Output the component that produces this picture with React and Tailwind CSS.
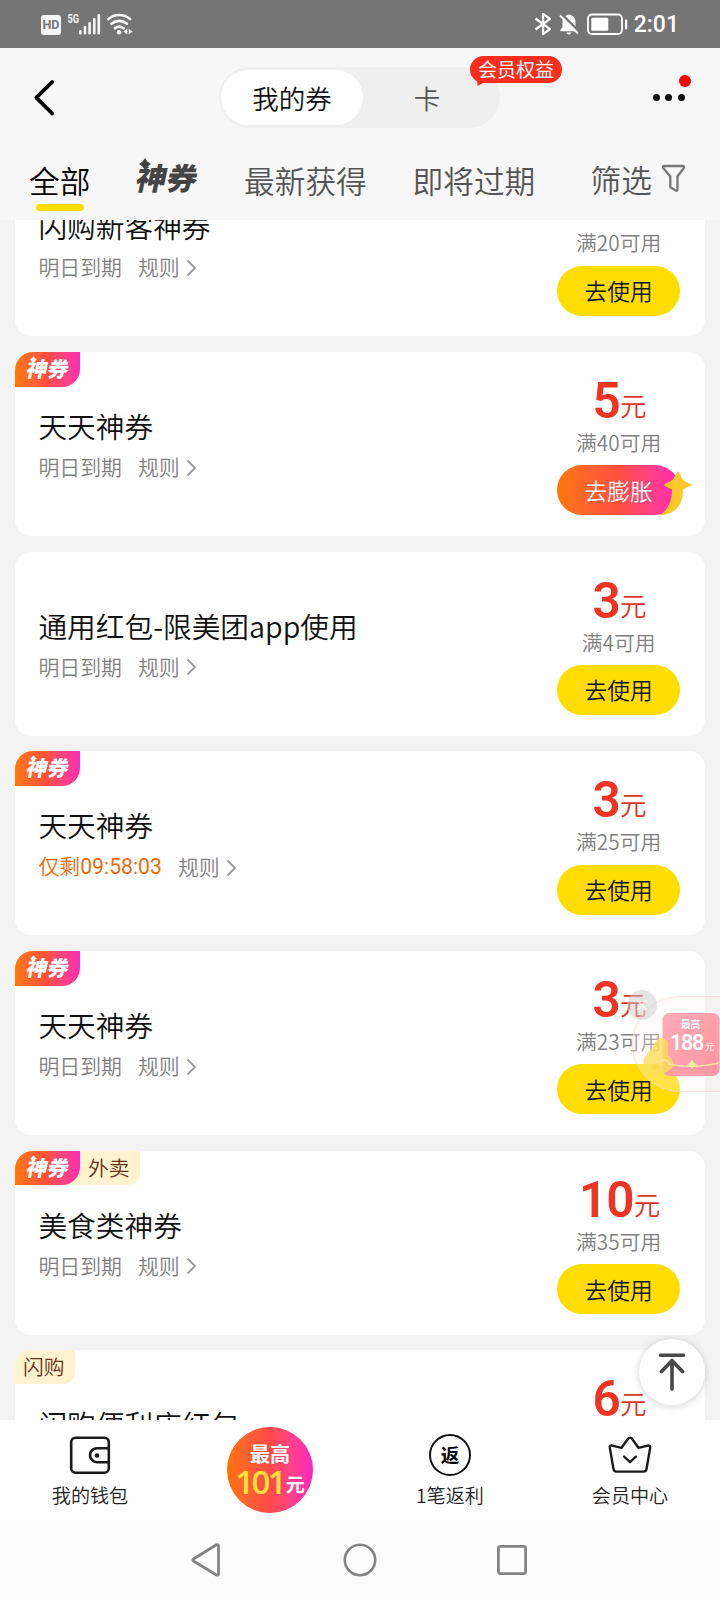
import React from 'react'

// first and last coupons are scrolled partly out of the list
const COUPONS = [
  { id: 1, title: '闪购新客神券', min: 20 },
  { id: 2, title: '天天神券', amount: 5, min: 40, magic: true, boost: true },
  { id: 3, title: '通用红包-限美团app使用', amount: 3, min: 4 },
  { id: 4, title: '天天神券', amount: 3, min: 25, magic: true, countdown: '09:58:03' },
  { id: 5, title: '天天神券', amount: 3, min: 23, magic: true },
  { id: 6, title: '美食类神券', amount: 10, min: 35, magic: true, tag: '外卖' },
  { id: 7, title: '闪购便利店红包', amount: 6, tag: '闪购' },
]

function StatusBar() {
  return (
    <div className="h-12 bg-[#757575] flex items-center justify-between pl-[41px] pr-[41px] text-white">
      <div className="flex items-center">
        <div className="w-[20px] h-[20px] mt-[2px] rounded-[3px] bg-[#f5f5f5] text-[#757575] text-[12.5px] font-bold font-['Roboto',sans-serif] flex items-center justify-center">HD</div>
        <svg className="ml-[6px]" width="36" height="24" viewBox="0 0 36 24" fill="#f5f5f5">
          <text x="0.500" y="10.800" fontSize="12" fontWeight="700" fontFamily="Roboto, sans-serif" textLength="11.500" lengthAdjust="spacingAndGlyphs">5G</text>
          <rect x="12" y="18" width="2.600" height="4.500" rx="1.200" />
          <rect x="16.700" y="14" width="2.600" height="8.500" rx="1.200" />
          <rect x="21.300" y="10" width="2.600" height="12.500" rx="1.200" />
          <rect x="26" y="6" width="2.600" height="16.500" rx="1.200" />
          <rect x="30.500" y="2" width="2.600" height="20.500" rx="1.200" />
        </svg>
        <svg className="ml-[3px]" width="28" height="24" viewBox="0 0 28 24" fill="none" stroke="#f5f5f5" strokeWidth="2.700" strokeLinecap="round">
          <path d="M2.500 7a16.500 16.500 0 0 1 21.500 0" />
          <path d="M5.500 11.700a12 12 0 0 1 15.500 0" />
          <path d="M9 16.300a7 7 0 0 1 8.500 0" />
          <circle cx="13" cy="20.300" r="2.200" fill="#f5f5f5" stroke="none" />
          <path d="M21.300 16.700v5.800l-3.800-2.900zM22.700 16.700v5.800l3.800-2.900z" fill="#f5f5f5" stroke="none" />
        </svg>
      </div>
      <div className="flex items-center">
        <svg width="18" height="24" viewBox="0 0 18 24" fill="none" stroke="#fff" strokeWidth="2.200" strokeLinejoin="round">
          <path d="M1.500 6.500 16 17.200 9 22V2l7 4.800L1.500 17.500" />
        </svg>
        <svg className="ml-[6px]" width="22" height="24" viewBox="0 0 22 24">
          <path d="M11 2.500c-4.200.8-6.500 3.500-6.500 7.500v5l-2.300 3.200v1h17.600v-1L17.500 15v-5c0-4-2.300-6.700-6.500-7.500z" fill="#fff" />
          <path d="M8.500 20.500h5c-.6 1.600-1.400 2-2.500 2s-1.900-.4-2.500-2z" fill="#fff" />
          <path d="M3.500 2 22 20.500" stroke="#757575" strokeWidth="2.500" />
          <path d="M2 3.500 20 21.500" stroke="#fff" strokeWidth="2" />
        </svg>
        <svg className="ml-[7px]" width="42" height="24" viewBox="0 0 42 24" fill="none">
          <rect x="1" y="2.500" width="34" height="19.500" rx="4" stroke="#fff" strokeWidth="1.800" />
          <rect x="4.300" y="5.700" width="17" height="13" rx="1.500" fill="#fff" />
          <rect x="38" y="7.500" width="2.200" height="10" rx="1" fill="#fff" />
        </svg>
        <div className="ml-[5px] mt-[2px] text-[23px] leading-6 font-medium font-['Roboto',sans-serif]">2:01</div>
      </div>
    </div>
  )
}

function MagicText({ small }) {
  return (
    <div className="relative">
      <div className={small
        ? 'text-[21px] leading-[33px] font-black -skew-x-12 text-white whitespace-nowrap'
        : 'text-[30.5px] leading-[36px] font-black -skew-x-12 text-[#444] whitespace-nowrap'}
      >
        神券
      </div>
      <svg
        className={small ? 'absolute left-[3px] top-[4px] w-[7px] h-[7px]' : 'absolute left-[2px] top-[-1px] w-[12px] h-[12px]'}
        viewBox="0 0 10 10"
        fill={small ? '#fff' : '#444'}
      >
        <path d="M5 0 7 3 10 5 7 7 5 10 3 7 0 5 3 3z" />
      </svg>
    </div>
  )
}

function Header() {
  return (
    <header className="h-[172px] bg-[#f7f7f7]">
      {/* Title switch */}
      <div className="relative h-[100px] flex justify-center pt-[19px]">
        <svg className="absolute left-[33px] top-[31px]" width="24" height="38" viewBox="0 0 24 38" fill="none" stroke="#000" strokeWidth="3.800" strokeLinecap="round" strokeLinejoin="round">
          <path d="M19.200 3 3.300 18.700 19.200 34.500" />
        </svg>
        <div className="w-[281px] h-[61px] mr-[1px] rounded-full bg-[#efefef] flex items-center px-[2px] py-[3px] text-[26.5px]">
          <div className="w-[142px] h-[55px] rounded-full bg-white text-[#111] flex items-center justify-center">我的券</div>
          <div className="flex-1 text-[#555] text-center pr-[7px]">卡</div>
        </div>
        <div className="absolute left-[470px] top-[8px] w-[92px] h-[27px] rounded-full bg-[#fb2d1e] text-white text-[19px] leading-[25px] text-center font-normal">
          会员权益
          <svg className="absolute left-[7px] top-[22px]" width="10" height="8" viewBox="0 0 10 8" fill="#fb2d1e">
            <path d="M0 0h10L6 5 .500 8z" />
          </svg>
        </div>
        <div className="absolute left-[652.5px] top-[46px] flex gap-[5.5px]">
          <span className="w-[7px] h-[7px] rounded-full bg-[#111]" />
          <span className="w-[7px] h-[7px] rounded-full bg-[#111]" />
          <span className="w-[7px] h-[7px] rounded-full bg-[#111]" />
        </div>
        <span className="absolute left-[679px] top-[27px] w-[12px] h-[12px] rounded-full bg-[#fe0000]" />
      </div>

      {/* Tabs */}
      <div className="flex pl-[29px] text-[30.7px] leading-[44px] text-[#555] pt-[10px]">
        <div className="w-[61px] text-black whitespace-nowrap">
          全部
          <div className="w-[48px] h-[7px] ml-[6.5px] mt-[2px] rounded-full bg-[#ffdd00]" />
        </div>
        <div className="ml-[47px] mt-[1px] w-[60px]"><MagicText /></div>
        <div className="ml-[47px] w-[122px] whitespace-nowrap">最新获得</div>
        <div className="ml-[46.5px] w-[122px] whitespace-nowrap">即将过期</div>
        <div className="ml-[56px] mt-[-1px] whitespace-nowrap">筛选</div>
        <svg className="ml-[9px] mt-[6px]" width="25" height="29" viewBox="0 0 25 29" fill="none" stroke="#777" strokeWidth="2.300" strokeLinejoin="round">
          <path d="M3.300 2h18.400c1.300 0 1.700 1 1 2.300l-6.200 8v13c0 1.400-.8 1.700-1.700 1.200l-5.500-3.200v-11L2.300 4.300c-.7-1.300-.3-2.300 1-2.300z" />
        </svg>
      </div>
    </header>
  )
}

function CouponCard({ coupon }) {
  return (
    <div className="relative h-[184px] mb-[15.7px] shrink-0 rounded-[16px] bg-white flex justify-between">
      {/* Corner labels */}
      <div className="absolute left-0 top-0 flex">
        {coupon.magic && (
          <div className="relative z-10 w-[65px] h-[34.5px] rounded-tl-[18px] rounded-br-[18px] bg-linear-to-r from-[#ff7700] via-[#ff4e3f] to-[#ff29b4] flex justify-center">
            <MagicText small />
          </div>
        )}
        {coupon.tag && (
          <div className={coupon.magic
            ? 'w-[78px] -ml-[18px] pl-[25.5px] h-[34px] rounded-br-[12px] bg-[#fff3cf] text-[#663216] text-[20.8px] leading-[32px]'
            : 'w-[60px] pl-[7.5px] h-[34px] rounded-tl-[16px] rounded-br-[12px] bg-[#fff3cf] text-[#663216] text-[20.8px] leading-[32px]'}
          >
            {coupon.tag}
          </div>
        )}
      </div>

      <div className="pl-[23px] pt-[55px]">
        <div className="text-[28.7px] leading-[38px] text-[#111] whitespace-nowrap">{coupon.title}</div>
        {coupon.min && (
          <div className="mt-[7px] flex items-center text-[20.9px] leading-[28px] text-[#808080]">
            {coupon.countdown ? (
              <span className="text-[#f16b0c]">
                仅剩<span className="font-['Roboto',sans-serif] font-normal text-[21.2px]">{coupon.countdown}</span>
              </span>
            ) : (
              <span>明日到期</span>
            )}
            <span className="ml-[16px]">规则</span>
            <svg className="ml-[6.5px] mt-[3px]" width="11" height="18" viewBox="0 0 11 18" fill="none" stroke="#999" strokeWidth="1.800">
              <path d="M1.500 1.500 9 9l-7.500 7.500" />
            </svg>
          </div>
        )}
      </div>

      <div className="w-[123px] mr-[24.5px] pt-[19px] flex flex-col items-center">
        <div className="h-[57px] flex items-baseline text-[#ef3423] pl-[2px]">
          {coupon.amount && (
            <>
              <span className="text-[49.5px] leading-[60px] font-semibold tracking-[-0.8px] font-['Roboto',sans-serif]">{coupon.amount}</span>
              <span className="relative -top-[2px] text-[26.5px] leading-[30px] text-[#dd3528]">元</span>
            </>
          )}
        </div>
        {coupon.min && (
          <>
            <div className="text-[20.8px] leading-[28px] text-[#808080] whitespace-nowrap">满{coupon.min}可用</div>
            {coupon.boost ? (
              <button className="relative mt-[9.3px] w-[123px] h-[50px] rounded-full bg-linear-to-r from-[#ff7700] via-[#ff4e3f] to-[#ff22b6] text-white text-[22.7px] leading-[49px] text-center">
                去膨胀
                <svg className="absolute left-[99px] top-[5px]" width="36" height="46" viewBox="0 0 36 46">
                  <path d="M16 18 26.500 18C28.500 30 22 45 4 45 12 40 16.500 30 16 18z" fill="#ffc928" />
                  <path d="M22 1.500c1.300 0 2.600 5.500 5 8.200s8.200 3.600 8.200 5-6 2.800-8.500 5.300-4 7.600-5.500 7.600-3-5.600-5-7.600-8-3.800-8-5.300 6-2.500 8.300-5 4-8.200 5.500-8.200z" fill="#ffc928" />
                </svg>
              </button>
            ) : (
              <button className="mt-[9.3px] w-[123px] h-[50px] rounded-full bg-[#ffdd00] text-[#111] text-[22.7px] leading-[49px] text-center">去使用</button>
            )}
          </>
        )}
      </div>
    </div>
  )
}

function FloatingPromo() {
  return (
    <div className="absolute left-[627px] top-[990px] w-[93px] h-[104px] overflow-hidden">
      <div className="absolute left-[5px] top-[6px] w-[130px] h-[96px] rounded-l-full border border-[#ffcfcf]/60 bg-[#fff3f3]/30" />
      <div className="absolute left-0 top-0 w-[30px] h-[30px] rounded-full bg-[#cccccc]/50">
        <svg className="absolute left-[9px] top-[9px]" width="12" height="12" viewBox="0 0 12 12" stroke="#fff" strokeWidth="2" opacity="0.600">
          <path d="M1 1 11 11M11 1 1 11" />
        </svg>
      </div>
      <svg className="absolute left-[3px] top-0" width="90" height="104" viewBox="0 0 90 104">
        <defs>
          <linearGradient id="promo" x1="0" y1="0" x2="1" y2="1">
            <stop offset="0" stopColor="#ff9fac" />
            <stop offset="1" stopColor="#fb8291" />
          </linearGradient>
        </defs>
        <rect x="32.500" y="23" width="57" height="63" rx="7" fill="url(#promo)" opacity="0.850" />
        <rect x="34" y="24.500" width="54" height="60" rx="6" fill="none" stroke="#ffb0bb" strokeWidth="2" opacity="0.400" />
        <path d="M26 51c3-4 10-4 12 1v13c4 4 7 8 4 13-6 6-17 9-24 5-5-4-6-13-2-18 4-4 7-9 10-14z" fill="#fbdf5a" opacity="0.800" />
        <path d="M28 73c5-5 10-3 12 0M38 74c14 3 32 3 51-1" fill="none" stroke="#ffe3a0" strokeWidth="1.300" />
        <circle cx="25" cy="77" r="3" fill="#ffd34a" opacity="0.600" />
        <path d="M62 69.500 64 73l3 1.500-3 1.500-2 3.500-2-3.500-3-1.500 3-1.500z" fill="#fff2a8" />
      </svg>
      <div className="absolute left-[35px] top-[27px] w-[57px] text-center text-[9.7px] leading-[14px] font-medium text-white">最高</div>
      <div className="absolute left-[43px] top-[41px] flex items-baseline text-white">
        <span className="text-[21.5px] leading-[24px] font-semibold tracking-[-1.3px] font-['Roboto',sans-serif]">188</span>
        <span className="ml-[2px] text-[9.5px] leading-[12px]">元</span>
      </div>
    </div>
  )
}

function BottomBar() {
  return (
    <nav className="h-[100px] bg-white grid grid-cols-4 text-[19.1px] leading-[28px] text-[#222]">
      <div className="flex flex-col items-center pt-[13px]">
        <svg width="44" height="44" viewBox="0 0 44 44" fill="none" stroke="#1a1a1a" strokeWidth="2.600">
          <rect x="3.200" y="4.700" width="37.600" height="35" rx="4.500" />
          <path d="M40.500 15.200H29a7 7 0 0 0 0 14h11.500" />
          <circle cx="29" cy="22.500" r="2.300" fill="#1a1a1a" stroke="none" />
        </svg>
        <span className="mt-[4px]">我的钱包</span>
      </div>
      <div className="flex justify-center pt-[7px]">
        <div className="w-[86px] h-[86px] rounded-full bg-linear-to-r from-[#ff7200] via-[#ff4a45] to-[#ff22c0] text-white flex flex-col items-center pt-[14px]">
          <div className="text-[20px] leading-[26px] font-bold">最高</div>
          <div className="flex items-baseline -mt-[1px]">
            <span className="text-[33px] leading-[32px] font-semibold tracking-[-2.6px] text-[#ffe23d] font-['Open_Sans',sans-serif]">101</span>
            <span className="relative -top-[2px] ml-[1.5px] text-[19px] leading-[24px] font-bold">元</span>
          </div>
        </div>
      </div>
      <div className="flex flex-col items-center pt-[14px]">
        <div className="w-[42px] h-[42px] rounded-full border-[2.5px] border-[#111] text-[18.5px] leading-[36px] font-bold text-black text-center">返</div>
        <span className="mt-[5px]">1笔返利</span>
      </div>
      <div className="flex flex-col items-center pt-[13px]">
        <svg width="44" height="44" viewBox="0 0 44 44" fill="none" stroke="#1a1a1a" strokeWidth="2.400" strokeLinecap="round" strokeLinejoin="round">
          <path d="M20 5.700c1.200-1.500 2.800-1.500 4 0l6.500 9.100 9.300-2.200c1.700-.2 2.500.6 2.400 2L38.500 36c-.3 1.700-1.300 2.600-3 2.600h-27c-1.700 0-2.700-.9-3-2.600L1.800 14.600c-.1-1.400.7-2.200 2.400-2l9.300 2.200z" />
          <path d="M16 23.500 22 29.200 28 23.500" />
        </svg>
        <span className="mt-[4px]">会员中心</span>
      </div>
    </nav>
  )
}

function SystemNav() {
  return (
    <div className="h-20 bg-[#fcfcfc] flex items-center pl-[191px] gap-[122px]">
      <svg width="30" height="34" viewBox="0 0 30 34" fill="none" stroke="#848484" strokeWidth="2.800" strokeLinejoin="round">
        <path d="M25.500 1.700Q27.500 1 27.500 3.500v27q0 2.500-2 1.500L2.800 18.300Q1 17 2.800 15.700z" />
      </svg>
      <svg width="34" height="34" viewBox="0 0 34 34" fill="none" stroke="#848484" strokeWidth="2.600">
        <circle cx="17" cy="17" r="15.200" />
      </svg>
      <svg className="-ml-[2px]" width="30" height="30" viewBox="0 0 30 30" fill="none" stroke="#848484" strokeWidth="2.800">
        <rect x="1.400" y="1.400" width="27.200" height="27.200" rx="2" />
      </svg>
    </div>
  )
}

export default function App() {
  return (
    <div className="relative w-[720px] h-[1600px] overflow-hidden bg-[#f3f3f3] font-['Noto_Sans_CJK_SC',sans-serif] font-[350]">
      <StatusBar />
      <Header />

      <main className="h-[1200px] overflow-hidden px-[15.4px]">
        <div className="-mt-[67.7px] flex flex-col">
          {COUPONS.map(coupon => <CouponCard key={coupon.id} coupon={coupon} />)}
        </div>
      </main>

      <BottomBar />
      <SystemNav />

      <FloatingPromo />

      {/* Back to top */}
      <button className="absolute left-[639px] top-[1339px] w-[66px] h-[66px] rounded-full bg-white shadow-[0_1px_8px_rgba(0,0,0,0.18)] flex items-center justify-center">
        <svg className="-mt-[1px]" width="28" height="38" viewBox="0 0 28 38" fill="none" stroke="#484848" strokeWidth="3.600" strokeLinecap="round" strokeLinejoin="round">
          <path d="M2.500 2.300h23M14 36V8M3.500 18.500 14 7.500l10.500 11" />
        </svg>
      </button>
    </div>
  )
}
